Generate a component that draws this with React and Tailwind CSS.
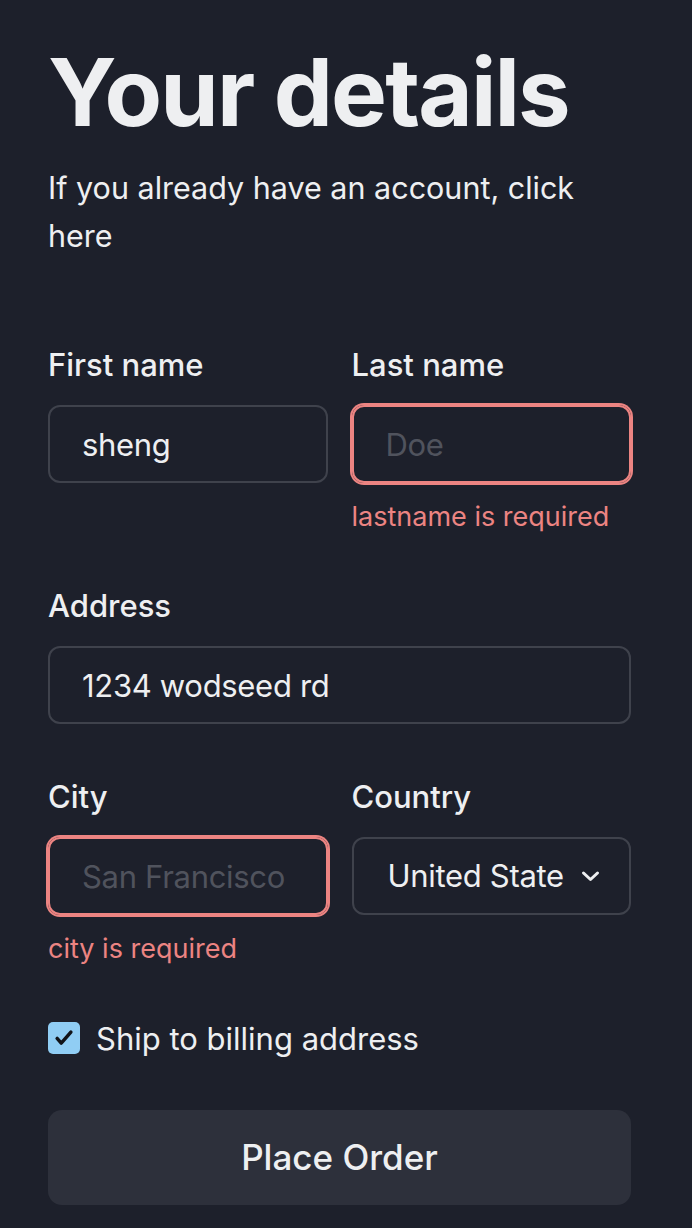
import React from 'react'

const labelClass = 'block text-[31px] font-medium leading-none text-[#eeeff1]'
const inputBase =
  'h-[78px] w-full rounded-[12px] bg-transparent px-[32px] text-[31px] tracking-[-0.01em] text-[#eeeff1] outline-none placeholder:text-[#50535d]'
const inputNormal = 'border-2 border-[#3f424c]'
const inputInvalid = 'border-2 border-[#ec8482] shadow-[0_0_0_2px_#ec8482]'

const Field = ({ label, children, error }) => (
  <div className="flex flex-col">
    <label className={labelClass}>{label}</label>
    <div className="mt-[25px]">{children}</div>
    {error && <p className="mt-[20px] text-[27px] leading-none text-[#ec8482]">{error}</p>}
  </div>
)

export default function App() {
  return (
    <div className="min-h-[1228px] w-full bg-[#1d202b] font-['Inter',sans-serif]">
      <div className="ml-[48px] w-[583px] pt-[45px]">
        <h1 className="text-[94px] font-bold leading-none tracking-[-0.02em] text-[#eeeff1]">Your details</h1>
        <p className="mt-[25px] max-w-[540px] text-[30.5px] leading-[48px] text-[#eeeff1]">
          If you already have an account, click here
        </p>

        <div className="mt-[89px] grid grid-cols-2 gap-x-[24px]">
          <Field label="First name">
            <input className={`${inputBase} ${inputNormal}`} defaultValue="sheng" placeholder="John" />
          </Field>
          <Field label="Last name" error="lastname is required">
            <input className={`${inputBase} ${inputInvalid}`} placeholder="Doe" />
          </Field>
        </div>

        <div className="mt-[60px]">
          <Field label="Address">
            <input className={`${inputBase} ${inputNormal}`} defaultValue="1234 wodseed rd" />
          </Field>
        </div>

        <div className="mt-[57px] grid grid-cols-2 gap-x-[24px]">
          <Field label="City" error="city is required">
            <input className={`${inputBase} ${inputInvalid}`} placeholder="San Francisco" />
          </Field>
          <Field label="Country">
            <div className={`flex h-[78px] w-full items-center rounded-[12px] pl-[34px] pr-[29px] ${inputNormal}`}>
              <span className="flex-1 overflow-hidden whitespace-nowrap text-[31px] tracking-[-0.01em] text-[#eeeff1]">
                United State
              </span>
              <svg width="19" height="12" viewBox="0 0 19 12" fill="none" stroke="#eeeff1" strokeWidth="3" strokeLinecap="round" strokeLinejoin="round">
                <path d="M2.5 3l7 6.5 7-6.5" />
              </svg>
            </div>
          </Field>
        </div>

        <label className="mt-[60px] flex h-[32px] items-center gap-[16px]">
          <span className="flex h-[32px] w-[32px] items-center justify-center rounded-[5px] bg-[#90cdf4]">
            <svg width="22" height="22" viewBox="0 0 24 24" fill="none" stroke="#111318" strokeWidth="3.8" strokeLinecap="round" strokeLinejoin="round">
              <path d="M4.5 12.5l4.5 5L19.5 5.5" />
            </svg>
          </span>
          <span className="text-[31px] leading-none text-[#eeeff1]">Ship to billing address</span>
        </label>

        <button
          type="button"
          className="mt-[56px] flex h-[95px] w-full items-center justify-center rounded-[14px] bg-[#2d303b] text-[35px] font-medium text-[#eeeff1]"
        >
          Place Order
        </button>
      </div>
    </div>
  )
}
